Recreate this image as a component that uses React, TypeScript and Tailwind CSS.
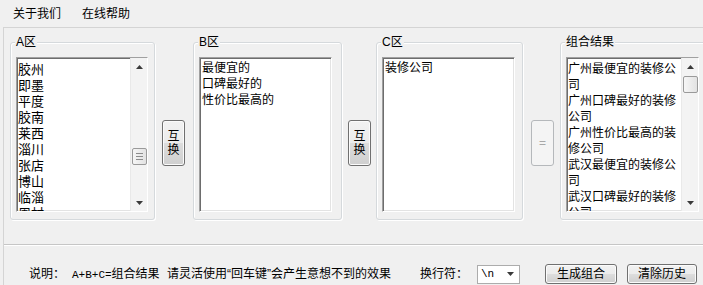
import React from "react";

const cityList = ["胶州", "即墨", "平度", "胶南", "莱西", "淄川", "张店", "博山", "临淄", "周村"];
const bList = ["最便宜的", "口碑最好的", "性价比最高的"];
const results = [
  "广州最便宜的装修公司",
  "广州口碑最好的装修公司",
  "广州性价比最高的装修公司",
  "武汉最便宜的装修公司",
  "武汉口碑最好的装修公司",
  "武汉性价比最高的装修公司",
];

const btn =
  "flex shrink-0 flex-col items-center justify-center rounded-[3px] border border-[#707070] bg-[linear-gradient(#f2f2f2,#ebebeb_50%,#dddddd_50%,#cfcfcf)] shadow-[inset_0_0_0_1px_#fbfbfb] text-[12px] leading-[14px] text-black";

const sunken =
  "shrink-0 border border-t-[#a0a0a0] border-l-[#a0a0a0] border-r-white border-b-white bg-white shadow-[inset_1px_1px_0_#6d6d6d,inset_-1px_-1px_0_#e3e3e3]";

function Arrow({ down }: { down?: boolean }) {
  return (
    <svg width="7" height="4" viewBox="0 0 7 4">
      <path d={down ? "M0 0H7L3.5 4z" : "M3.5 0L7 4H0z"} fill="#3a3a3a" />
    </svg>
  );
}

function ScrollBar({ thumbClass, grip }: { thumbClass: string; grip?: boolean }) {
  return (
    <div className="flex w-[17px] shrink-0 flex-col border-l border-[#e9e9e9] bg-[#f3f3f3]">
      <div className="flex h-[17px] items-center justify-center">
        <Arrow />
      </div>
      <div className="flex-1">
        <div
          className={`mx-auto flex h-[17px] w-[15px] flex-col items-center justify-center gap-[2px] rounded-[2px] border border-[#9a9a9a] bg-[linear-gradient(90deg,#f6f6f6,#e2e2e2)] ${thumbClass}`}
        >
          {grip && (
            <>
              <div className="h-px w-[7px] bg-[#8c8c8c]" />
              <div className="h-px w-[7px] bg-[#8c8c8c]" />
              <div className="h-px w-[7px] bg-[#8c8c8c]" />
            </>
          )}
        </div>
      </div>
      <div className="flex h-[17px] items-center justify-center">
        <Arrow down />
      </div>
    </div>
  );
}

function Group({ label, className, children }: { label: string; className: string; children: React.ReactNode }) {
  return (
    <div
      className={`relative h-[178px] shrink-0 rounded-[3px] border border-[#d5d9dc] shadow-[inset_1px_1px_0_#ffffff,1px_1px_0_#ffffff] ${className}`}
    >
      <span className="absolute -top-[8px] left-[4px] bg-[#f0f0f0] px-[1px] text-[12px] leading-[14px] text-black">
        {label}
      </span>
      {children}
    </div>
  );
}

export default function App() {
  return (
    <div className="h-[285px] w-[703px] overflow-hidden bg-[#f0f0f0] font-['Liberation_Sans','Noto_Sans_CJK_SC',sans-serif] text-[12px] text-black">
      {/* menu */}
      <div className="flex h-[27px] items-center gap-[21px] pl-[13px] leading-none">
        <span>关于我们</span>
        <span>在线帮助</span>
      </div>

      <div className="ml-[3px] flex h-[258px] flex-col border-l border-t border-[#d4d4d4]">
        <div className="flex items-start pt-[14px]">
          <Group label="A区" className="ml-[6px] w-[145px]">
            <div className={`${sunken} ml-[5px] mt-[14px] flex h-[155px] w-[132px]`}>
              <div className="flex-1 overflow-hidden pl-[1px] pt-[4px] text-[13px] leading-[16px]">
                {cityList.map((c) => (
                  <div key={c}>{c}</div>
                ))}
              </div>
              <ScrollBar thumbClass="mt-[73px]" grip />
            </div>
          </Group>

          <div className={`${btn} ml-[7px] mt-[78px] h-[46px] w-[23px]`}>
            <span>互</span>
            <span>换</span>
          </div>

          <Group label="B区" className="ml-[8px] w-[149px]">
            <div className={`${sunken} ml-[5px] mt-[14px] h-[155px] w-[133px] pl-[2px] pt-[2px] leading-[16px]`}>
              {bList.map((t) => (
                <div key={t}>{t}</div>
              ))}
            </div>
          </Group>

          <div className={`${btn} ml-[6px] mt-[78px] h-[46px] w-[23px]`}>
            <span>互</span>
            <span>换</span>
          </div>

          <Group label="C区" className="ml-[5px] w-[147px]">
            <div className={`${sunken} ml-[5px] mt-[14px] h-[155px] w-[133px] pl-[2px] pt-[2px] leading-[16px]`}>
              <div>装修公司</div>
            </div>
          </Group>

          <div className="ml-[8px] mt-[78px] flex h-[46px] w-[23px] shrink-0 items-center justify-center rounded-[3px] border border-[#b5b8bb] bg-[#f4f4f4] text-[12px] text-[#a8a8a8]">
            =
          </div>

          <Group label="组合结果" className="ml-[6px] w-[150px]">
            <div className={`${sunken} ml-[5px] mt-[14px] flex h-[155px] w-[133px]`}>
              <div className="flex-1 overflow-hidden pl-[1px] pt-[3px] leading-[16px]">
                {results.map((r) => (
                  <div key={r}>{r}</div>
                ))}
              </div>
              <ScrollBar thumbClass="mt-[1px]" />
            </div>
          </Group>
        </div>

        {/* separator */}
        <div className="mt-[24px] border-t border-b border-t-[#c6c6c6] border-b-white" />

        {/* bottom row */}
        <div className="mt-[18px] flex h-[20px] items-center leading-none">
          <span className="ml-[25px] w-[43px] shrink-0">说明：</span>
          <span className="w-[95px] shrink-0">
            <span className="font-['Liberation_Mono',monospace] text-[11px]">A+B+C=</span>组合结果
          </span>
          <span className="w-[253px] shrink-0">请灵活使用“回车键”会产生意想不到的效果</span>
          <span className="w-[57px] shrink-0">换行符：</span>
          <div className="flex h-[19px] w-[43px] shrink-0 items-center justify-between border border-[#acacac] bg-white pl-[3px] pr-[5px]">
            <span className="font-['Liberation_Mono',monospace] text-[11px]">\n</span>
            <Arrow down />
          </div>
          <div
            className={`${btn} ml-[25px] h-[20px] w-[72px] border-[#3c7fb1] shadow-[inset_0_0_0_1px_#c4e3f7]`}
          >
            生成组合
          </div>
          <div className={`${btn} ml-[10px] h-[20px] w-[70px]`}>清除历史</div>
        </div>
      </div>
    </div>
  );
}
